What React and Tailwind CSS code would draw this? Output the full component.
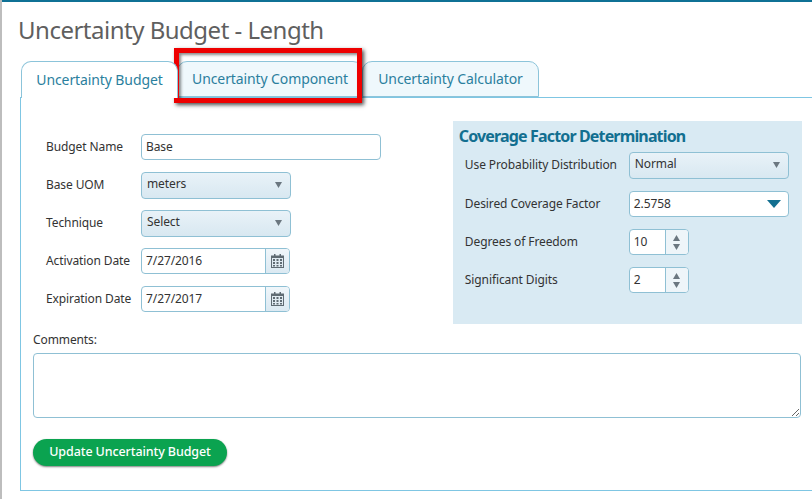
const fieldBorder = 'border border-[#8fc0d4] rounded-[4px]';

const Arrow = ({ dir = 'down' }) => (
  <svg width="7" height="6" viewBox="0 0 7 6">
    <path d={dir === 'down' ? 'M0 0h7L3.500 6z' : 'M0 6h7L3.500 0z'} fill="#6b7780" />
  </svg>
);

const Row = ({ label, labelClass, className = '', children }) => (
  <div className={`flex items-center h-[26px] ${className}`}>
    <div className={`shrink-0 text-[12px] text-[#333] ${labelClass}`}>{label}</div>
    {children}
  </div>
);

const Select = ({ value, width = 'w-[150px]' }) => (
  <div className={`${width} h-[27px] ${fieldBorder} bg-gradient-to-b from-[#e9f2f8] to-[#d8e8f1] flex items-center justify-between pl-[5px] pr-[8px]`}>
    <span className="text-[12px] text-[#333] -mt-[3px]">{value}</span>
    <Arrow />
  </div>
);

const CalendarIcon = () => (
  <svg width="13" height="14" viewBox="0 0 13 14">
    <path d="M0 1.500h13V14H0z" fill="#5f6b73" />
    <path d="M1 4h11v9H1z" fill="#dfeaf1" />
    <path d="M2 5h2v2H2zM5.500 5h2v2h-2zM9 5h2v2H9zM2 8h2v2H2zM5.500 8h2v2h-2zM9 8h2v2H9zM2 11h2v1.500H2zM5.500 11h2v1.500h-2zM9 11h2v1.500H9z" fill="#5f6b73" />
    <path d="M3 0h1.500v3H3zM8.500 0H10v3H8.500z" fill="#5f6b73" />
  </svg>
);

const DateField = ({ value }) => (
  <div className={`w-[149px] h-[26px] ${fieldBorder} bg-white flex overflow-hidden`}>
    <span className="flex-1 pl-[4px] text-[12px] leading-[24px] text-[#333]">{value}</span>
    <span className="w-[24px] border-l border-[#8fc0d4] bg-gradient-to-b from-[#f0f6fa] to-[#dbe9f2] flex items-center justify-center">
      <CalendarIcon />
    </span>
  </div>
);

const Spinner = ({ value }) => (
  <div className={`w-[60px] h-[26px] ${fieldBorder} bg-white flex overflow-hidden`}>
    <span className="flex-1 pl-[4px] text-[12px] leading-[24px] text-[#333]">{value}</span>
    <span className="w-[23px] border-l border-[#8fc0d4] bg-[#eef5f9] flex flex-col items-center justify-center gap-[3px]">
      <Arrow dir="up" />
      <Arrow />
    </span>
  </div>
);

const Tab = ({ label, active, className = '' }) => (
  <div className={`border border-[#8cc4da] rounded-t-[10px] flex items-center justify-center pb-[2px] text-[14px] text-[#2b7f9e] ${active ? 'bg-white border-b-0 relative z-10 h-[37px] -mb-px' : 'h-[36px] bg-[#eff8fc]'} ${className}`}>
    {label}
  </div>
);

export default function App() {
  return (
    <div className="w-[812px] h-[499px] bg-white overflow-hidden border-l-2 border-[#bdbdbd] relative font-['Noto_Sans','Open_Sans',sans-serif] tracking-[-0.1px]">
      <div className="absolute top-0 left-0 right-0 h-[2px] bg-[#0f7195]" />
      <h1 className="pl-[16px] pt-[14px] h-[61px] text-[24px] leading-[32px] text-[#5f5f5f] tracking-[-0.5px]">Uncertainty Budget - Length</h1>

      <div className="flex pl-[19px]">
        <Tab label="Uncertainty Budget" active className="w-[157px]" />
        <Tab label="Uncertainty Component" className="w-[186px] -ml-px" />
        <Tab label="Uncertainty Calculator" className="w-[177px] -ml-px" />
      </div>

      <div className="ml-[18px] -mr-px h-[394px] border border-[#7fc6e3] pl-[12px] pr-[10px]">
        <div className="flex">
          <div className="w-[422px] pt-[36px] pl-[13px] flex flex-col gap-[12px]">
            <Row label="Budget Name" labelClass="w-[95px]">
              <div className={`w-[240px] h-[26px] ${fieldBorder} pl-[4px] text-[12px] leading-[24px] text-[#333]`}>Base</div>
            </Row>
            <Row label="Base UOM" labelClass="w-[95px]"><Select value="meters" /></Row>
            <Row label="Technique" labelClass="w-[95px]"><Select value="Select" /></Row>
            <Row label="Activation Date" labelClass="w-[95px]"><DateField value="7/27/2016" /></Row>
            <Row label="Expiration Date" labelClass="w-[95px]"><DateField value="7/27/2017" /></Row>
          </div>

          <div className="mt-[23px] w-[351px] h-[203px] bg-[#d9eaf3] pl-[6px] pt-[6px]">
            <h2 className="text-[16px] leading-[18px] font-bold text-[#126f90] tracking-[-0.85px]">Coverage Factor Determination</h2>
            <div className="mt-[7px] pl-[6px] flex flex-col gap-[12px]">
              <Row label="Use Probability Distribution" labelClass="w-[164px]" className="mb-px"><Select value="Normal" width="w-[160px]" /></Row>
              <Row label="Desired Coverage Factor" labelClass="w-[164px]">
                <div className={`w-[160px] h-[26px] ${fieldBorder} bg-white flex items-center justify-between pl-[4px] pr-[7px]`}>
                  <span className="text-[12px] text-[#333]">2.5758</span>
                  <svg width="14" height="8" viewBox="0 0 14 8"><path d="M0 0h14L7 8z" fill="#126f90" /></svg>
                </div>
              </Row>
              <Row label="Degrees of Freedom" labelClass="w-[164px]"><Spinner value="10" /></Row>
              <Row label="Significant Digits" labelClass="w-[164px]"><Spinner value="2" /></Row>
            </div>
          </div>
        </div>

        <div className="mt-[8px] text-[12px] leading-[16px] text-[#333]">Comments:</div>
        <textarea className="block mt-[5px] w-[768px] h-[65px] border border-[#8fc0d4] rounded-[4px] outline-none" />
        <button className="mt-[21px] w-[194px] h-[27px] rounded-full bg-[#0ba350] shadow-[0_1px_2px_rgba(0,0,0,0.5)] text-[12.5px] font-medium text-white">Update Uncertainty Budget</button>
      </div>

      <div className="absolute left-[172px] top-[48px] w-[188px] h-[55px] border-[5px] border-[#ee0000] shadow-[2px_2px_4px_rgba(0,0,0,0.7),inset_2px_2px_3px_rgba(0,0,0,0.45)] pointer-events-none" />
    </div>
  );
}
